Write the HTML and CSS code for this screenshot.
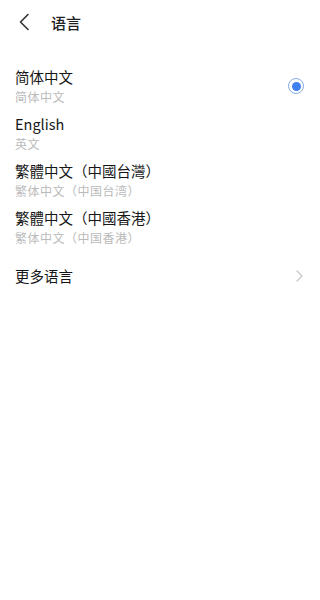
FILE: index.html
```html
<!DOCTYPE html>
<html lang="zh-CN">
<head>
  <meta charset="UTF-8" />
  <title>语言</title>
  <link rel="stylesheet" href="styles.css">
</head>
<body>
  <header class="topbar">
    <span class="back">
      <svg width="12" height="18" viewBox="0 0 12 18">
        <path d="M10 1.5 L2.5 9 L10 16.5" fill="none" stroke="#333" stroke-width="1.6" stroke-linecap="round" stroke-linejoin="round"/>
      </svg>
    </span>
    <h1 class="title">语言</h1>
  </header>

  <ul class="lang-list">
    <li class="lang">
      <div class="lang-text">
        <div class="lang-name">简体中文</div>
        <div class="lang-sub">简体中文</div>
      </div>
      <span class="radio"></span>
    </li>
    <li class="lang">
      <div class="lang-text">
        <div class="lang-name">English</div>
        <div class="lang-sub">英文</div>
      </div>
    </li>
    <li class="lang">
      <div class="lang-text">
        <div class="lang-name">繁體中文（中國台灣）</div>
        <div class="lang-sub">繁体中文（中国台湾）</div>
      </div>
    </li>
    <li class="lang">
      <div class="lang-text">
        <div class="lang-name">繁體中文（中國香港）</div>
        <div class="lang-sub">繁体中文（中国香港）</div>
      </div>
    </li>
    <li class="lang more">
      <div class="lang-name">更多语言</div>
      <svg class="arrow" width="7" height="12" viewBox="0 0 7 12">
        <path d="M1 1 L6 6 L1 11" fill="none" stroke="#c8c8c8" stroke-width="1.3" stroke-linecap="round" stroke-linejoin="round"/>
      </svg>
    </li>
  </ul>
</body>
</html>
```

FILE: styles.css
```css
* {
  box-sizing: border-box;
}

body {
  margin: 0;
  background: #fff;
  font-family: "Noto Sans CJK SC", "Noto Sans", sans-serif;
  color: #161616;
}

/* Top bar */
.topbar {
  height: 44px;
  display: flex;
  align-items: center;
  padding-left: 18px;
}

.back {
  display: flex;
  width: 33px;
}

.title {
  margin: 0;
  font-size: 15px;
  font-weight: 500;
  color: #222;
}

/* Language list */
.lang-list {
  list-style: none;
  margin: 17px 0 0;
  padding: 0 16px 0 15px;
}

.lang {
  display: flex;
  align-items: center;
  justify-content: space-between;
  padding: 6px 0 3px;
}

.lang-name {
  font-size: 14.5px;
  line-height: 20px;
}

.lang-sub {
  margin-top: 2px;
  font-size: 12px;
  line-height: 16px;
  letter-spacing: 0.5px;
  color: #bababa;
}

.radio {
  width: 16px;
  height: 16px;
  border-radius: 50%;
  border: 1.5px solid #86a9e2;
  display: flex;
  align-items: center;
  justify-content: center;
}

.radio::after {
  content: "";
  width: 9px;
  height: 9px;
  border-radius: 50%;
  background: #3f7fef;
}

.more {
  margin-top: 11px;
}

.arrow {
  margin-right: 1px;
}
```
